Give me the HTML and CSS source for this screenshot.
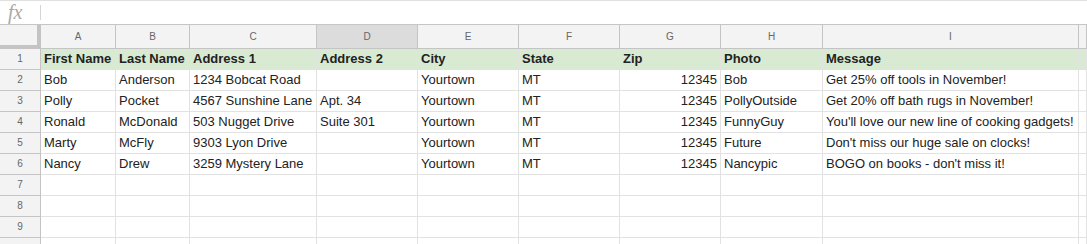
FILE: index.html
```html
<!DOCTYPE html>
<html lang="en">
<head>
    <meta charset="UTF-8">
    <title>Mail merge sheet</title>
    <link rel="stylesheet" href="styles.css">
</head>
<body>

<div class="formula-bar">
    <span class="fx">fx</span>
    <span class="divider"></span>
</div>

<div class="sheet">
    <!-- column headers -->
    <div class="corner"></div>
    <div class="col-head">A</div>
    <div class="col-head">B</div>
    <div class="col-head">C</div>
    <div class="col-head selected">D</div>
    <div class="col-head">E</div>
    <div class="col-head">F</div>
    <div class="col-head">G</div>
    <div class="col-head">H</div>
    <div class="col-head">I</div>
    <div class="col-head"></div>

    <!-- row 1 -->
    <div class="row-head">1</div>
    <div class="cell title">First Name</div>
    <div class="cell title">Last Name</div>
    <div class="cell title">Address 1</div>
    <div class="cell title">Address 2</div>
    <div class="cell title">City</div>
    <div class="cell title">State</div>
    <div class="cell title">Zip</div>
    <div class="cell title">Photo</div>
    <div class="cell title">Message</div>
    <div class="cell title"></div>

    <!-- row 2 -->
    <div class="row-head">2</div>
    <div class="cell">Bob</div>
    <div class="cell">Anderson</div>
    <div class="cell">1234 Bobcat Road</div>
    <div class="cell"></div>
    <div class="cell">Yourtown</div>
    <div class="cell">MT</div>
    <div class="cell num">12345</div>
    <div class="cell">Bob</div>
    <div class="cell">Get 25% off tools in November!</div>
    <div class="cell"></div>

    <!-- row 3 -->
    <div class="row-head">3</div>
    <div class="cell">Polly</div>
    <div class="cell">Pocket</div>
    <div class="cell">4567 Sunshine Lane</div>
    <div class="cell">Apt. 34</div>
    <div class="cell">Yourtown</div>
    <div class="cell">MT</div>
    <div class="cell num">12345</div>
    <div class="cell">PollyOutside</div>
    <div class="cell">Get 20% off bath rugs in November!</div>
    <div class="cell"></div>

    <!-- row 4 -->
    <div class="row-head">4</div>
    <div class="cell">Ronald</div>
    <div class="cell">McDonald</div>
    <div class="cell">503 Nugget Drive</div>
    <div class="cell">Suite 301</div>
    <div class="cell">Yourtown</div>
    <div class="cell">MT</div>
    <div class="cell num">12345</div>
    <div class="cell">FunnyGuy</div>
    <div class="cell">You'll love our new line of cooking gadgets!</div>
    <div class="cell"></div>

    <!-- row 5 -->
    <div class="row-head">5</div>
    <div class="cell">Marty</div>
    <div class="cell">McFly</div>
    <div class="cell">9303 Lyon Drive</div>
    <div class="cell"></div>
    <div class="cell">Yourtown</div>
    <div class="cell">MT</div>
    <div class="cell num">12345</div>
    <div class="cell">Future</div>
    <div class="cell">Don't miss our huge sale on clocks!</div>
    <div class="cell"></div>

    <!-- row 6 -->
    <div class="row-head">6</div>
    <div class="cell">Nancy</div>
    <div class="cell">Drew</div>
    <div class="cell">3259 Mystery Lane</div>
    <div class="cell"></div>
    <div class="cell">Yourtown</div>
    <div class="cell">MT</div>
    <div class="cell num">12345</div>
    <div class="cell">Nancypic</div>
    <div class="cell">BOGO on books - don't miss it!</div>
    <div class="cell"></div>

    <!-- empty rows -->
    <div class="row-head">7</div>
    <div class="cell"></div><div class="cell"></div><div class="cell"></div><div class="cell"></div><div class="cell"></div>
    <div class="cell"></div><div class="cell"></div><div class="cell"></div><div class="cell"></div><div class="cell"></div>

    <div class="row-head">8</div>
    <div class="cell"></div><div class="cell"></div><div class="cell"></div><div class="cell"></div><div class="cell"></div>
    <div class="cell"></div><div class="cell"></div><div class="cell"></div><div class="cell"></div><div class="cell"></div>

    <div class="row-head">9</div>
    <div class="cell"></div><div class="cell"></div><div class="cell"></div><div class="cell"></div><div class="cell"></div>
    <div class="cell"></div><div class="cell"></div><div class="cell"></div><div class="cell"></div><div class="cell"></div>

    <div class="row-head"></div>
    <div class="cell"></div><div class="cell"></div><div class="cell"></div><div class="cell"></div><div class="cell"></div>
    <div class="cell"></div><div class="cell"></div><div class="cell"></div><div class="cell"></div><div class="cell"></div>
</div>

</body>
</html>
```

FILE: styles.css
```css
body {
    margin: 0;
    background: #fff;
    font-family: 'Liberation Sans', Arial, sans-serif;
    color: #222;
    overflow: hidden;
}
.formula-bar {
    height: 23px;
    border-top: 1px solid #e0e0e0;
    border-bottom: 1px solid #c6c6c6;
    box-sizing: content-box;
    display: flex;
    align-items: center;
}
.formula-bar .fx {
    width: 40px;
    padding-left: 8px;
    box-sizing: border-box;
    font-family: 'Liberation Serif', serif;
    font-style: italic;
    font-size: 20px;
    color: #a8a8a8;
    line-height: 23px;
}
.formula-bar .divider {
    width: 1px;
    height: 15px;
    background: #d6d6d6;
}
.sheet {
    display: grid;
    grid-template-columns: 41px 75px 74px 127px 101px 101px 101px 101px 102px 256px 1fr;
    grid-template-rows: 24px;
    grid-auto-rows: 21px;
}
.sheet > div {
    box-sizing: border-box;
    border-right: 1px solid #e2e2e2;
    border-bottom: 1px solid #e2e2e2;
    white-space: nowrap;
    overflow: hidden;
}
.sheet .corner {
    background: #f3f3f3;
    border-right: 4px solid #c4c4c4;
    border-bottom: 4px solid #c4c4c4;
}
.sheet .col-head {
    background: #f3f3f3;
    border-right-color: #c4c4c4;
    border-bottom-color: #c4c4c4;
    font-size: 10px;
    color: #666;
    text-align: center;
    line-height: 23px;
}
.sheet .col-head.selected {
    background: #dcdcdc;
}
.sheet .row-head {
    background: #f3f3f3;
    border-right-color: #c4c4c4;
    border-bottom-color: #c4c4c4;
    font-size: 10px;
    color: #666;
    text-align: center;
    line-height: 20px;
}
.sheet .cell {
    font-size: 13px;
    line-height: 20px;
    padding: 0 3px;
}
.sheet .title {
    background: #d9ead3;
    font-weight: bold;
}
.sheet .num {
    text-align: right;
}
```
